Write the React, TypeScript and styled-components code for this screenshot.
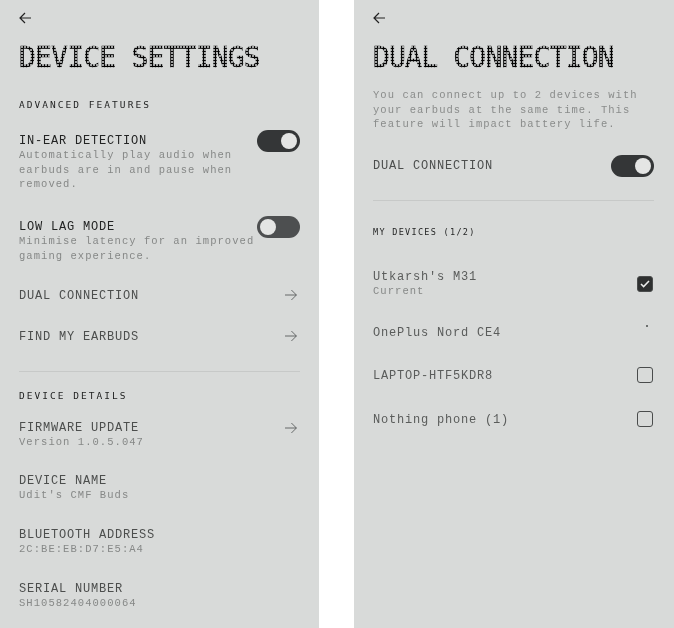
import React from "react"
import styled, { createGlobalStyle } from "styled-components"

const mono = `"Liberation Mono", "DejaVu Sans Mono", monospace`
const wideMono = `"DejaVu Sans Mono", "Liberation Mono", monospace`

const GlobalStyle = createGlobalStyle`
  html, body {
    margin: 0;
    padding: 0;
    background: #ffffff;
  }
`

const Screen = styled.div`
  width: 674px;
  height: 628px;
  display: flex;
  gap: 35px;
  overflow: hidden;
  font-family: ${mono};
  filter: blur(0.25px);
`

const Panel = styled.section<{ $width: number; $right: number }>`
  width: ${(p) => p.$width}px;
  height: 628px;
  box-sizing: border-box;
  padding: 0 ${(p) => p.$right}px 0 19px;
  background: #d8dad9;
  flex: none;
`

const BackButton = styled.div`
  height: 36px;
  display: flex;
  align-items: center;
`

const Title = styled.h1`
  margin: 8px 0 0;
  height: 28px;
  font-family: ${wideMono};
  font-size: 28px;
  line-height: 28px;
  font-weight: 400;
  letter-spacing: -0.8px;
  white-space: nowrap;
  color: transparent;
  background-image: radial-gradient(circle at 50% 50%, #000000 1px, rgba(0, 0, 0, 0.75) 1.25px, transparent 1.5px);
  background-size: 3px 3px;
  -webkit-background-clip: text;
  background-clip: text;
  -webkit-text-stroke: 0.6px transparent;
`

const SectionLabel = styled.h2<{ $top: number; $small?: boolean }>`
  margin: ${(p) => p.$top}px 0 0;
  height: 14px;
  font-family: ${wideMono};
  font-size: ${(p) => (p.$small ? 8.5 : 9.5)}px;
  line-height: 14px;
  font-weight: 400;
  letter-spacing: ${(p) => (p.$small ? 1.3 : 2.04)}px;
  color: #1f2020;
  white-space: nowrap;
`

const Intro = styled.p`
  margin: 16px 0 0;
  font-size: 10.5px;
  line-height: 14.5px;
  letter-spacing: 1.05px;
  color: #8a8c8b;
  white-space: nowrap;
`

const Row = styled.div<{ $height: number; $top?: number }>`
  margin-top: ${(p) => p.$top ?? 0}px;
  height: ${(p) => p.$height}px;
  display: flex;
  align-items: flex-start;
  justify-content: space-between;
  position: relative;
`

const CenterRow = styled(Row)`
  align-items: center;
`

const Label = styled.div<{ $dim?: boolean }>`
  font-size: 12px;
  line-height: 13px;
  letter-spacing: 0.8px;
  color: ${(p) => (p.$dim ? "#4c4e4d" : "#222323")};
  white-space: nowrap;
`

const DeviceName = styled(Label)<{ $drop?: boolean }>`
  padding-top: ${(p) => (p.$drop ? 3 : 0)}px;
  color: #5a5c5b;
`

const Sub = styled.div`
  font-size: 10.5px;
  line-height: 14.5px;
  letter-spacing: 1.05px;
  color: #868887;
  white-space: nowrap;
`

const Toggle = styled.div<{ $on: boolean }>`
  width: 43px;
  height: 22px;
  box-sizing: border-box;
  padding: 3px;
  border-radius: 11px;
  flex: none;
  display: flex;
  justify-content: ${(p) => (p.$on ? "flex-end" : "flex-start")};
  background: ${(p) => (p.$on ? "#343637" : "#4d4f50")};
`

const FloatingToggle = styled(Toggle)`
  position: absolute;
  top: -5px;
  right: 0;
`

const RowToggle = styled(Toggle)`
  margin-top: -2px;
`

const Knob = styled.span`
  width: 16px;
  height: 16px;
  border-radius: 50%;
  background: #e4e5e4;
`

const Divider = styled.hr<{ $top: number }>`
  margin: ${(p) => p.$top}px 0 0;
  border: 0;
  height: 1px;
  background: #c7c9c8;
`

const CheckBox = styled.span<{ $on?: boolean }>`
  width: 14px;
  height: 14px;
  margin-right: 1px;
  margin-top: ${(p) => (p.$on ? 5 : 0)}px;
  flex: none;
  display: flex;
  align-items: center;
  justify-content: center;
  border-radius: 3px;
  border: 1.2px solid #4a4c4c;
  background: ${(p) => (p.$on ? "#2e3030" : "transparent")};
`

const Speck = styled.span`
  position: absolute;
  right: 6px;
  top: 1px;
  width: 2px;
  height: 2px;
  border-radius: 50%;
  background: #4a4c4b;
`

const ArrowSlot = styled.span<{ $lift?: boolean }>`
  display: flex;
  margin-right: 3px;
  margin-top: ${(p) => (p.$lift ? -2 : 0)}px;
`

const BackIcon = () => (
  <svg width="12" height="12" viewBox="0 0 12 12" fill="none" stroke="#222" strokeWidth="1.2">
    <path d="M12 6H1M6 1 1 6l5 5" />
  </svg>
)

const ForwardIcon = () => (
  <svg width="12" height="12" viewBox="0 0 12 12" fill="none" stroke="#4a4c4c" strokeWidth="0.8">
    <path d="M0 6H11.4M6.4 1l5 5-5 5" />
  </svg>
)

const TickIcon = () => (
  <svg width="10" height="8" viewBox="0 0 10 8" fill="none" stroke="#ecedec" strokeWidth="1.5">
    <path d="M1 4l2.6 2.6L9 1" />
  </svg>
)

const DeviceSettings = () => (
  <Panel $width={319} $right={19}>
    <BackButton>
      <BackIcon />
    </BackButton>
    <Title>DEVICE SETTINGS</Title>
    <SectionLabel $top={26}>ADVANCED FEATURES</SectionLabel>
    <Row $height={86} $top={23}>
      <div>
        <Label>IN-EAR DETECTION</Label>
        <Sub>
          Automatically play audio when
          <br />
          earbuds are in and pause when
          <br />
          removed.
        </Sub>
      </div>
      <FloatingToggle $on>
        <Knob />
      </FloatingToggle>
    </Row>
    <Row $height={52}>
      <div>
        <Label>LOW LAG MODE</Label>
        <Sub>
          Minimise latency for an improved
          <br />
          gaming experience.
        </Sub>
      </div>
      <FloatingToggle $on={false}>
        <Knob />
      </FloatingToggle>
    </Row>
    <CenterRow $height={20} $top={13}>
      <Label $dim>DUAL CONNECTION</Label>
      <ArrowSlot $lift>
        <ForwardIcon />
      </ArrowSlot>
    </CenterRow>
    <CenterRow $height={20} $top={21}>
      <Label $dim>FIND MY EARBUDS</Label>
      <ArrowSlot $lift>
        <ForwardIcon />
      </ArrowSlot>
    </CenterRow>
    <Divider $top={24} />
    <SectionLabel $top={17}>DEVICE DETAILS</SectionLabel>
    <Row $height={32} $top={19}>
      <div>
        <Label $dim>FIRMWARE UPDATE</Label>
        <Sub>Version 1.0.5.047</Sub>
      </div>
      <ArrowSlot>
        <ForwardIcon />
      </ArrowSlot>
    </Row>
    <Row $height={32} $top={21}>
      <div>
        <Label $dim>DEVICE NAME</Label>
        <Sub>Udit's CMF Buds</Sub>
      </div>
    </Row>
    <Row $height={32} $top={22}>
      <div>
        <Label $dim>BLUETOOTH ADDRESS</Label>
        <Sub>2C:BE:EB:D7:E5:A4</Sub>
      </div>
    </Row>
    <Row $height={32} $top={22}>
      <div>
        <Label $dim>SERIAL NUMBER</Label>
        <Sub>SH10582404000064</Sub>
      </div>
    </Row>
  </Panel>
)

const DualConnection = () => (
  <Panel $width={320} $right={20}>
    <BackButton>
      <BackIcon />
    </BackButton>
    <Title>DUAL CONNECTION</Title>
    <Intro>
      You can connect up to 2 devices with
      <br />
      your earbuds at the same time. This
      <br />
      feature will impact battery life.
    </Intro>
    <CenterRow $height={22} $top={24}>
      <Label $dim>DUAL CONNECTION</Label>
      <RowToggle $on>
        <Knob />
      </RowToggle>
    </CenterRow>
    <Divider $top={22} />
    <SectionLabel $small $top={24}>
      MY DEVICES (1/2)
    </SectionLabel>
    <Row $height={32} $top={32}>
      <div>
        <DeviceName>Utkarsh's M31</DeviceName>
        <Sub>Current</Sub>
      </div>
      <CheckBox $on>
        <TickIcon />
      </CheckBox>
    </Row>
    <CenterRow $height={16} $top={21}>
      <DeviceName $drop>OnePlus Nord CE4</DeviceName>
      <Speck />
    </CenterRow>
    <CenterRow $height={16} $top={27}>
      <DeviceName $drop>LAPTOP-HTF5KDR8</DeviceName>
      <CheckBox />
    </CenterRow>
    <CenterRow $height={16} $top={28}>
      <DeviceName $drop>Nothing phone (1)</DeviceName>
      <CheckBox />
    </CenterRow>
  </Panel>
)

const App: React.FC = () => (
  <>
    <GlobalStyle />
    <Screen>
      <DeviceSettings />
      <DualConnection />
    </Screen>
  </>
)

export default App
